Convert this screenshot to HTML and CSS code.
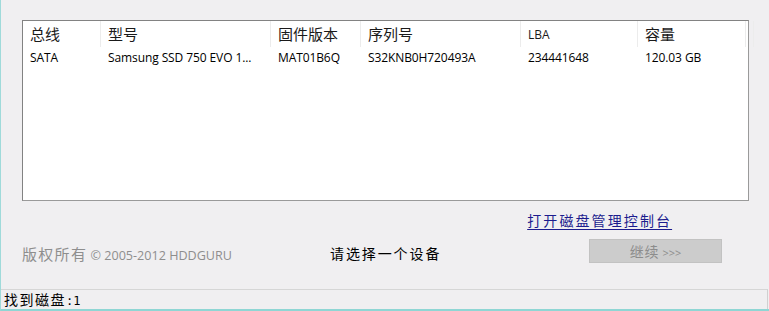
FILE: index.html
```html
<!DOCTYPE html>
<html lang="zh">
<head>
<meta charset="utf-8">
<title>HDD Guru</title>
<link rel="stylesheet" href="styles.css">
</head>
<body>
<div class="window">
  <div class="main">
    <div class="list">
      <div class="row head">
        <div class="cell cjk">总线</div>
        <div class="cell cjk">型号</div>
        <div class="cell cjk">固件版本</div>
        <div class="cell cjk">序列号</div>
        <div class="cell lat">LBA</div>
        <div class="cell cjk">容量</div>
        <div class="cell"></div>
      </div>
      <div class="row data">
        <div class="cell">SATA</div>
        <div class="cell">Samsung SSD 750 EVO 1...</div>
        <div class="cell">MAT01B6Q</div>
        <div class="cell">S32KNB0H720493A</div>
        <div class="cell">234441648</div>
        <div class="cell">120.03 GB</div>
        <div class="cell"></div>
      </div>
    </div>
    <div class="linkrow"><a class="link" href="#">打开磁盘管理控制台</a></div>
    <div class="bottom">
      <div class="copy"><span class="copy-cn">版权所有</span> © 2005-2012 HDDGURU</div>
      <div class="hint">请选择一个设备</div>
      <button class="btn" disabled><span class="btn-cn">继续</span> &gt;&gt;&gt;</button>
    </div>
  </div>
  <div class="status">找到磁盘<span class="mono">:1</span></div>
</div>
</body>
</html>
```
FILE: styles.css
```css
html, body {
  margin: 0;
  padding: 0;
  background: #f0eff1;
}
.window {
  width: 768px;
  height: 309px;
  border-left: 1px solid #9fdada;
  border-bottom: 2px solid #8fd6d4;
  display: flex;
  flex-direction: column;
  font-family: "Open Sans", "Noto Sans CJK SC", sans-serif;
  color: #000;
}
.main {
  flex: 1;
  padding: 20px 0 0 21px;
}
.list {
  width: 725px;
  height: 179px;
  background: #fff;
  border: 1px solid #828282;
  border-right-color: #9a9a9a;
  border-bottom-color: #9a9a9a;
}
.row {
  display: grid;
  grid-template-columns: 78px 170px 90px 160px 117px 108px 2px;
}
.head {
  height: 26px;
}
.head .cell {
  border-right: 1px solid #ececec;
  height: 26px;
  line-height: 26px;
  font-size: 15px;
  color: #1a1a1a;
  font-family: "Noto Sans CJK SC", sans-serif;
}
.head .cell.lat {
  font-family: "Open Sans", sans-serif;
  font-size: 12px;
  padding-top: 1px;
}
.cell {
  padding-left: 7px;
  white-space: nowrap;
  overflow: hidden;
  box-sizing: border-box;
}
.data .cell {
  height: 20px;
  line-height: 21px;
  font-size: 12px;
  letter-spacing: -0.1px;
}
.linkrow {
  display: flex;
  justify-content: flex-end;
  padding-right: 99px;
  margin-top: 5px;
  height: 28px;
}
.link {
  font-family: "Noto Sans CJK SC", sans-serif;
  font-size: 14px;
  letter-spacing: 2.1px;
  margin-right: -2.1px;
  color: #1c1c8e;
  text-decoration: underline;
  text-underline-offset: 3px;
  line-height: 28px;
}
.bottom {
  display: flex;
  align-items: center;
  height: 26px;
  margin-top: 5px;
}
.copy {
  font-size: 12.6px;
  color: #8e8e8e;
  width: 308px;
  white-space: nowrap;
  padding-top: 2px;
}
.copy-cn {
  font-family: "Noto Sans CJK SC", sans-serif;
  font-size: 15px;
  letter-spacing: 1.3px;
}
.hint {
  font-family: "Noto Sans CJK SC", sans-serif;
  font-size: 14px;
  letter-spacing: 1.9px;
  width: 259px;
  padding-top: 2px;
}
.btn {
  width: 133px;
  height: 24px;
  background: #cccccc;
  border: 1px solid #c2c2c2;
  color: #8c8c8c;
  font-family: "Open Sans", sans-serif;
  font-size: 11px;
  padding: 0;
  margin-top: -3px;
}
.btn-cn {
  font-family: "Noto Sans CJK SC", sans-serif;
  font-size: 14px;
  letter-spacing: 1px;
}
.status {
  border-top: 1px solid #d6d6d6;
  border-right: 1px solid #d0d0d0;
  margin-right: 1px;
  padding-left: 3px;
  font-family: "Noto Sans CJK SC", sans-serif;
  font-size: 14px;
  letter-spacing: 1.5px;
  line-height: 19px;
  box-sizing: border-box;
  height: 20px;
}
.mono {
  font-family: "DejaVu Sans Mono", monospace;
  font-size: 12px;
  letter-spacing: 0;
}
```
